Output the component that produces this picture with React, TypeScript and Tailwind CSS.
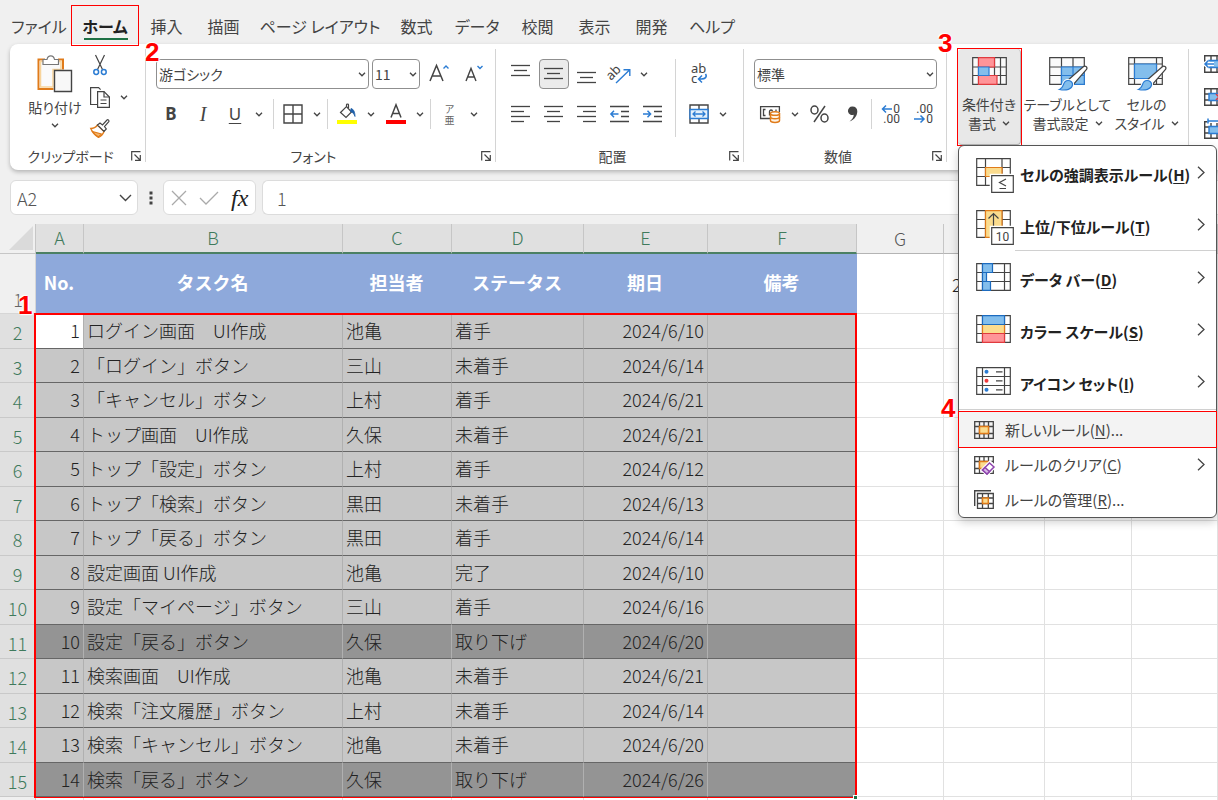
import type { ReactNode } from "react";

const INK = "#444444";
const BLUE = "#2b7cd3";
const ORANGE = "#e07b1a";

const tabs = [
  { label: "ファイル", width: "w-[66px]" },
  { label: "ホーム", width: "w-[66px]", active: true },
  { label: "挿入", width: "w-[57px]" },
  { label: "描画", width: "w-[57px]" },
  { label: "ページ レイアウト", width: "w-[136px]" },
  { label: "数式", width: "w-[57px]" },
  { label: "データ", width: "w-[64px]" },
  { label: "校閲", width: "w-[57px]" },
  { label: "表示", width: "w-[57px]" },
  { label: "開発", width: "w-[57px]" },
  { label: "ヘルプ", width: "w-[64px]" },
];

const columns = ["A", "B", "C", "D", "E", "F", "G", "", "", ""];
const headings = ["No.", "タスク名", "担当者", "ステータス", "期日", "備考"];

const tasks = [
  { no: 1, name: "ログイン画面　UI作成", owner: "池亀", status: "着手", due: "2024/6/10" },
  { no: 2, name: "「ログイン」ボタン", owner: "三山", status: "未着手", due: "2024/6/14" },
  { no: 3, name: "「キャンセル」ボタン", owner: "上村", status: "着手", due: "2024/6/21" },
  { no: 4, name: "トップ画面　UI作成", owner: "久保", status: "未着手", due: "2024/6/21" },
  { no: 5, name: "トップ「設定」ボタン", owner: "上村", status: "着手", due: "2024/6/12" },
  { no: 6, name: "トップ「検索」ボタン", owner: "黒田", status: "未着手", due: "2024/6/13" },
  { no: 7, name: "トップ「戻る」ボタン", owner: "黒田", status: "着手", due: "2024/6/14" },
  { no: 8, name: "設定画面 UI作成", owner: "池亀", status: "完了", due: "2024/6/10" },
  { no: 9, name: "設定「マイページ」ボタン", owner: "三山", status: "着手", due: "2024/6/16" },
  { no: 10, name: "設定「戻る」ボタン", owner: "久保", status: "取り下げ", due: "2024/6/20" },
  { no: 11, name: "検索画面　UI作成", owner: "池亀", status: "未着手", due: "2024/6/21" },
  { no: 12, name: "検索「注文履歴」ボタン", owner: "上村", status: "未着手", due: "2024/6/14" },
  { no: 13, name: "検索「キャンセル」ボタン", owner: "池亀", status: "未着手", due: "2024/6/20" },
  { no: 14, name: "検索「戻る」ボタン", owner: "久保", status: "取り下げ", due: "2024/6/26" },
];

function Svg({ w, h, children }: { w: number; h: number; children: ReactNode }) {
  return (
    <svg width={w} height={h} viewBox={`0 0 ${w} ${h}`} fill="none" stroke={INK} strokeWidth="1.2" className="shrink-0 overflow-visible" aria-hidden="true">
      {children}
    </svg>
  );
}

function Chevron() {
  return (
    <Svg w={8} h={5}>
      <path d="M1 .8 4 3.8 7 .8" strokeWidth="1.3" />
    </Svg>
  );
}

function Callout({ n, className }: { n: number; className: string }) {
  return (
    <span className={`absolute z-30 font-['Liberation_Sans',sans-serif] text-[26px] leading-6 font-bold text-[#ff0000] [text-shadow:0_0_2px_#fff,0_0_2px_#fff,1px_1px_1px_#fff,-1px_-1px_1px_#fff] ${className}`}>
      {n}
    </span>
  );
}

function Divider({ className = "h-[30px]" }: { className?: string }) {
  return <span className={`mx-0.5 w-px shrink-0 bg-[#d4d4d4] ${className}`} />;
}

function Tool({ label, children, active = false }: { label: string; children: ReactNode; active?: boolean }) {
  return (
    <button aria-label={label} className="flex h-[30px] w-[33px] shrink-0 items-center justify-center">
      {active ? (
        <span className="flex h-[30px] w-[30px] items-center justify-center rounded border border-[#8f8f8f] bg-[#ebebeb]">{children}</span>
      ) : (
        children
      )}
    </button>
  );
}

function Drop({ label }: { label: string }) {
  return (
    <button aria-label={label} className="flex h-[30px] w-4 shrink-0 items-center justify-center">
      <Chevron />
    </button>
  );
}

function Group({ title, width, children }: { title: string; width: string; children: ReactNode }) {
  return (
    <section aria-label={title} className={`relative flex shrink-0 flex-col pt-[15px] ${width}`}>
      <div className="h-[86px]">{children}</div>
      <div className="flex h-[22px] items-center pr-[5px]">
        <span className="flex-1 text-center text-sm leading-5 text-[#444]">{title}</span>
        <button aria-label={`${title}の設定`}>
          <Svg w={10} h={10}>
            <path d="M.7 9.500V.7h8.800M3.500 3.500l5 5M9.300 4v5.300H4" />
          </Svg>
        </button>
      </div>
      <span className="absolute top-[5px] right-0 h-[113px] w-px bg-[#d4d4d4]" />
    </section>
  );
}

function Picker({ label, value, width }: { label: string; value: string; width: string }) {
  return (
    <span className={`relative flex h-[30px] items-center rounded border border-[#8f8f8f] bg-white ${width}`}>
      <select aria-label={label} className="h-full w-full appearance-none bg-transparent pl-0.5 text-sm text-[#444] outline-none">
        <option>{value}</option>
      </select>
      <span className="pointer-events-none absolute right-0.5 flex h-full items-center">
        <Chevron />
      </span>
    </span>
  );
}

function PasteIcon() {
  return (
    <Svg w={36} h={38}>
      <path d="M8 4.500H1.500v29.500h15M21 4.500h5v10" stroke={ORANGE} strokeWidth="2" />
      <path d="M3.500 6.500h20.500v8h-8V32H3.500z" fill="#fafafa" stroke="#f8d49b" strokeWidth="1.500" />
      <path d="M6 9.500v-5h4C10.500 2 12 .8 13.800.8S17 2 17.500 4.500h4v5z" fill="#fff" stroke="#777" />
      <path d="M17.500 15.500h17v21h-17z" fill="#f8f8f8" stroke={INK} strokeWidth="1.400" />
    </Svg>
  );
}

function CutIcon() {
  return (
    <Svg w={14} h={21}>
      <path d="M2.500 0 9.500 14.500M11.500 0 4.500 14.500" />
      <circle cx="3.200" cy="17" r="2.400" stroke={BLUE} strokeWidth="1.500" />
      <circle cx="10.800" cy="17" r="2.400" stroke={BLUE} strokeWidth="1.500" />
    </Svg>
  );
}

function CopyIcon() {
  return (
    <Svg w={20} h={21}>
      <path d="M7.500 17.500H.6V.6h8l2 2" />
      <path d="M7.600 4.600h6.400l5.400 5.400v10.400H7.600z" fill="#fff" />
      <path d="M14 4.600V10h5.400M10.500 13h6M10.500 16.500h6" />
    </Svg>
  );
}

function PainterIcon() {
  return (
    <Svg w={20} h={19}>
      <path d="M.8 9.500C4 9.500 6 8 7.500 6l6.500 6.500C13 15 11 17.500 8.500 18.300 5 16.500 2.500 13.500.8 9.500Z" fill="#fff" stroke={ORANGE} strokeWidth="1.400" />
      <path d="M2.500 12.500 11.500 15 8.500 18C6 16.500 4 14.800 2.500 12.500Z" fill="#f5b56a" stroke={ORANGE} />
      <path d="m7.500 6 2.500-2 2.500 2L17 1c1-.8 2.600.6 1.800 1.700L14.500 7.500l1.800 2.500-2.300 2.500z" fill="#fff" />
    </Svg>
  );
}

// Stacked text lines, each as [x, y, length].
function Lines({ rows, h = 20 }: { rows: number[][]; h?: number }) {
  return (
    <Svg w={19} h={h}>
      {rows.map(([x, y, len]) => (
        <path key={y} d={`M${x} ${y}.5h${len}`} strokeWidth="1.300" />
      ))}
    </Svg>
  );
}

function IndentIcon({ out = false }: { out?: boolean }) {
  return (
    <Svg w={19} h={18}>
      <path d="M0 1.500h19M11 6.500h8M11 11.500h8M0 16.500h19" strokeWidth="1.300" />
      {out ? <path d="M8.500 9H1M4 5.800.9 9 4 12.200" stroke={BLUE} strokeWidth="1.500" /> : <path d="M0 9h7.500M4.500 5.800 7.600 9l-3.100 3.200" stroke={BLUE} strokeWidth="1.500" />}
    </Svg>
  );
}

function OrientationIcon() {
  return (
    <Svg w={22} h={20}>
      <text x="-1" y="14" transform="rotate(-45 4 12)" stroke="none" fill={INK} fontSize="13" fontFamily="Noto Sans, sans-serif">ab</text>
      <path d="M7 19 20.500 6M14.500 5.700h6.300v6.300" stroke={BLUE} strokeWidth="1.400" />
    </Svg>
  );
}

function WrapIcon() {
  return (
    <Svg w={18} h={20}>
      <text x="1" y="9" stroke="none" fill={INK} fontSize="13" fontFamily="Noto Sans, sans-serif">ab</text>
      <text x="1" y="19" stroke="none" fill={INK} fontSize="13" fontFamily="Noto Sans, sans-serif">c</text>
      <path d="M15.500 10c2 3-.5 5-4 5H9M12 11.500 8.500 15l3.500 3.500" stroke={BLUE} strokeWidth="1.500" />
    </Svg>
  );
}

function MergeIcon() {
  return (
    <Svg w={20} h={20}>
      <path d="M1 1h18v18H1zM10 1v4M10 15v4" strokeWidth="1.400" />
      <path d="M1 5.500h18v9H1z" fill="#e3f0fb" stroke={BLUE} strokeWidth="1.400" />
      <path d="M4 10h12M6.500 7.500 4 10l2.500 2.500M13.500 7.500 16 10l-2.500 2.500" stroke={BLUE} strokeWidth="1.300" />
    </Svg>
  );
}

function FillIcon() {
  return (
    <Svg w={20} h={20}>
      <path d="M0 16h20v4H0z" fill="#ffff00" stroke="none" />
      <path d="m3.500 8.500 6-6 5 5.500-5.500 5.500zM9.500 2.500V.8c0-1 2-1 2 0V4" fill="#fff" />
      <path d="M14 4.500c2.500.5 4 3.500 4 8-1.500-3.500-2.500-4.500-4.500-4.800z" fill="#1f5fa8" stroke="#1f5fa8" strokeWidth=".8" />
    </Svg>
  );
}

function CurrencyIcon() {
  return (
    <Svg w={21} h={17}>
      <path d="M10 12.500H.6V.6h18.800V6M5.500 3.500h-2v6h2M9.500 9.500v-4c0-2 3-2 3 0M16 3.500v2" strokeWidth="1.300" />
      <path d="M10.500 7.500v7c0 2.500 9 2.500 9 0v-7" fill="#fff3e3" stroke={ORANGE} strokeWidth="1.500" />
      <ellipse cx="15" cy="7.500" rx="4.500" ry="1.800" fill="#fff" stroke={ORANGE} strokeWidth="1.500" />
      <path d="M10.500 11c0 2.300 9 2.300 9 0" stroke={ORANGE} strokeWidth="1.500" />
    </Svg>
  );
}

function DecimalIcon({ more = false }: { more?: boolean }) {
  return (
    <Svg w={20} h={20}>
      <text x="19" y="9" textAnchor="end" stroke="none" fill={INK} fontSize="12" fontFamily="Roboto, sans-serif">{more ? "0" : ".00"}</text>
      <text x="19" y="19" textAnchor="end" stroke="none" fill={INK} fontSize="12" fontFamily="Roboto, sans-serif">{more ? ".00" : "0"}</text>
      {more ? <path d="M11 5H1.500M5 1.500 1.500 5 5 8.500" stroke={BLUE} strokeWidth="1.500" /> : <path d="M0 15h10M6.500 11.500 10 15l-3.500 3.500" stroke={BLUE} strokeWidth="1.500" />}
    </Svg>
  );
}

function ConditionalIcon() {
  return (
    <Svg w={35} h={28}>
      <path d="M.7.7h33.600v26.600H.7zM.7 10h33.600M.7 18.500h33.600M6.500.7v26.600M22.500.7v26.600M28.500.7v26.600" fill="#fafafa" />
      <path d="M6.500.7h16V10h-16zM6.500 18.500h18.500v8.800H6.500z" fill="#ff9498" stroke="#e03a3e" />
      <path d="M6.500 10h10.500v8.500H6.500z" fill="#83beec" stroke={BLUE} />
    </Svg>
  );
}

function Brush() {
  return (
    <>
      <path d="M18 24 34 10c2-2 5 0 3.500 2.500L24 28z" fill="#fff" />
      <path d="M19 23.500c2.500 0 5 2 4.500 4.500-.5 4-6 6-13 4.500 3-1.200 3.200-2.500 4-5 .8-2.500 2-4 4.500-4Z" fill="#6fb1e8" stroke="#fff" strokeWidth="3" />
      <path d="M19 23.500c2.500 0 5 2 4.500 4.500-.5 4-6 6-13 4.500 3-1.200 3.200-2.500 4-5 .8-2.500 2-4 4.500-4Z" fill="#83beec" stroke={BLUE} />
    </>
  );
}

function TableFormatIcon() {
  return (
    <Svg w={38} h={34}>
      <path d="M.7.7h34.600v26.600H.7zM.7 10h34.600M.7 18.500h34.600M12.500.7v26.600M24 .7v26.600" fill="#fafafa" />
      <path d="M12.500 10h22.800v17.300H12.500z" fill="#83beec" stroke={BLUE} />
      <path d="M12.500 18.500h22.800M24 10v17.300" stroke={BLUE} />
      <Brush />
    </Svg>
  );
}

function CellStyleIcon() {
  return (
    <Svg w={38} h={34}>
      <path d="M.7.7h33.600v26.600H.7zM.7 7h33.600M.7 21.500h33.600M6.500.7v26.600M28.500.7v26.600" fill="#fafafa" />
      <path d="M6.500 7h22v14.500h-22z" fill="#83beec" stroke={BLUE} />
      <Brush />
    </Svg>
  );
}

function CellsIcon({ kind }: { kind: "insert" | "delete" | "format" }) {
  return (
    <Svg w={20} h={18}>
      <path d="M.7.7h18.600v16.600H.7zM.7 6h18.600M.7 12h18.600M7 .7V6M7 12v5.300M13 .7V6M13 12v5.300" fill="#fff" strokeWidth="1.400" />
      <path d="M5 5.500h15v7H5z" fill="#83beec" stroke={BLUE} strokeWidth="1.400" />
      {kind === "insert" && <path d="M10 9H1M4.500 5.500 1 9l3.500 3.500" stroke="#fff" strokeWidth="4" />}
      {kind === "insert" && <path d="M10 9H1M4.500 5.500 1 9l3.500 3.500" stroke={BLUE} strokeWidth="1.500" />}
      {kind === "delete" && <path d="m12 6 6 6M18 6l-6 6" stroke="#e03a3e" strokeWidth="1.500" />}
      {kind === "format" && <path d="M3.500-2H20v4H3.500z" fill="#fff" stroke="none" />}
      {kind === "format" && <path d="M4 0h16M4-2.500v5" stroke={BLUE} strokeWidth="1.500" />}
    </Svg>
  );
}

function MenuGrid({ children }: { children: ReactNode }) {
  return (
    <Svg w={38} h={35}>
      {children}
    </Svg>
  );
}

const wideGrid = "M.7.7h33.600v26.600H.7zM.7 9.500h33.600M.7 18.500h33.600M6.500.7v26.600M28.500.7v26.600";
const ruleGrid = "M.7.7h33.600v26.600H.7zM.7 9.500h33.600M.7 18.500h33.600M9.500.7v26.600M26 .7v26.600";

function SmallGrid() {
  return <path d="M.7.7h18.600v16.600H.7zM.7 5.500h18.600M.7 12.500h18.600M5.500.7v16.600M14.500.7v16.600M10 .7v16.600" strokeWidth="1.300" />;
}

const bigItems = [
  {
    label: "セルの強調表示ルール",
    accel: "H",
    icon: (
      <MenuGrid>
        <path d={ruleGrid} />
        <path d="M9.500 9.500H26v9H9.500z" fill="#fbdc8e" stroke={ORANGE} />
        <path d="M15.700 17.700h21.600v16.600H15.700z" fill="#fff" stroke="#fff" strokeWidth="4" />
        <path d="M15.700 17.700h21.600v16.600H15.700z" fill="#fff" />
        <path d="m30 21-6.500 3.500L30 28M23.500 30.500H30" />
      </MenuGrid>
    ),
  },
  {
    label: "上位/下位ルール",
    accel: "T",
    icon: (
      <MenuGrid>
        <path d={ruleGrid} />
        <path d="M9.500.7H26v26.600H9.500z" fill="#fbdc8e" stroke={ORANGE} />
        <path d="M17.500 16V3.500M12.500 8.500l5-5 5 5" />
        <path d="M15.700 17.700h21.600v16.600H15.700z" fill="#fff" stroke="#fff" strokeWidth="4" />
        <path d="M15.700 17.700h21.600v16.600H15.700z" fill="#fff" />
        <text x="26.500" y="30.500" textAnchor="middle" fontSize="12" stroke="none" fill={INK} fontFamily="Roboto, sans-serif">10</text>
      </MenuGrid>
    ),
  },
  {
    label: "データ バー",
    accel: "D",
    icon: (
      <MenuGrid>
        <path d={wideGrid} />
        <path d="M6.500.7h10v8.800h-10zM6.500 9.500h4v9h-4zM6.500 18.500h8v8.800h-8z" fill="#83beec" stroke="#1c6bbf" />
      </MenuGrid>
    ),
  },
  {
    label: "カラー スケール",
    accel: "S",
    icon: (
      <MenuGrid>
        <path d={wideGrid} />
        <path d="M6.500 9.500h22v9h-22z" fill="#fbdc8e" stroke={ORANGE} />
        <path d="M6.500.7h22v8.800h-22z" fill="#83beec" stroke="#1c6bbf" />
        <path d="M6.500 18.500h22v8.800h-22z" fill="#ff9498" stroke="#e03a3e" />
      </MenuGrid>
    ),
  },
  {
    label: "アイコン セット",
    accel: "I",
    icon: (
      <MenuGrid>
        <path d={wideGrid} />
        <path d="M20 4.800h6.500M20 13.800h6.500M20 22.800h6.500" />
        <g stroke="none">
          <circle cx="10.500" cy="4.800" r="2" fill={BLUE} />
          <circle cx="10.500" cy="13.800" r="2" fill="#f03a3e" />
          <circle cx="10.500" cy="22.800" r="2" fill={BLUE} />
        </g>
      </MenuGrid>
    ),
  },
];

const smallItems = [
  {
    label: "新しいルール",
    accel: "N",
    tail: "...",
    active: true,
    icon: (
      <Svg w={20} h={18}>
        <SmallGrid />
        <path d="M5.500 5.500h9v7h-9z" fill="#fbdc8e" stroke={ORANGE} strokeWidth="1.500" />
      </Svg>
    ),
  },
  {
    label: "ルールのクリア",
    accel: "C",
    tail: "",
    sub: true,
    icon: (
      <Svg w={20} h={18}>
        <SmallGrid />
        <path d="M5.500 5.500h9v7h-9z" fill="#fbdc8e" stroke={ORANGE} strokeWidth="1.500" />
        <path d="m8 14 8-8 5 4.500-8 8z" fill="#fff" stroke="#fff" strokeWidth="3" />
        <path d="m8.500 14 7-7 4.500 4-7 7z" fill="#fff" stroke="#8e44ad" strokeWidth="1.500" />
        <path d="m8.500 14 2.500-2.500 4.500 4L13 18z" fill="#d9b8e8" stroke="#8e44ad" strokeWidth="1.500" />
      </Svg>
    ),
  },
  {
    label: "ルールの管理",
    accel: "R",
    tail: "...",
    icon: (
      <Svg w={20} h={19}>
        <path d="M.7 16V.7H17" strokeWidth="1.400" />
        <path d="M3.500 3.500h15.800v14.800H3.500zM3.500 8h15.800M3.500 13.500h15.800M8.500 3.500v14.800M14.300 3.500v14.800" strokeWidth="1.300" />
        <path d="M8.500 8h5.800v5.500H8.500z" fill="#fbdc8e" stroke={ORANGE} strokeWidth="1.500" />
      </Svg>
    ),
  },
];

function SubArrow() {
  return (
    <Svg w={8} h={13}>
      <path d="m1 .8 6 5.700-6 5.700" strokeWidth="1.300" />
    </Svg>
  );
}

function RuleMenu() {
  return (
    <div role="menu" className="absolute top-24 left-0 z-20 w-[259px] rounded-md border border-[#555] bg-white text-[15px] leading-6 text-[#222] shadow-[0_4px_10px_rgba(0,0,0,0.2)]">
      {bigItems.map((item, i) => (
        <div key={item.accel}>
          {i === 2 && <hr className="ml-14 border-[#d0d0d0]" />}
          <button role="menuitem" className="flex h-[52px] w-full items-center pr-[11px] pl-[17px]">
            <span className="flex h-[29px] w-11 shrink-0 items-start">{item.icon}</span>
            <span className="flex-1 pt-1.5 text-left font-bold whitespace-nowrap">
              {item.label}(<u className="underline-offset-2">{item.accel}</u>)
            </span>
            <SubArrow />
          </button>
        </div>
      ))}
      <hr className="my-0.5 border-[#d0d0d0]" />
      {smallItems.map((item) => (
        <div key={item.accel} className="relative">
          <button role="menuitem" className={`flex h-[35px] w-full items-center pr-[11px] pl-[15px] ${item.active ? "bg-[#f3f3f3] outline-1 outline-[#f00]" : ""}`}>
            <span className="flex w-[31px] shrink-0">{item.icon}</span>
            <span className="flex-1 text-left whitespace-nowrap text-[#444]">
              {item.label}(<u className="underline-offset-2">{item.accel}</u>){item.tail}
            </span>
            {item.sub && <SubArrow />}
          </button>
          {item.active && <Callout n={4} className="-top-4 -left-[18px]" />}
        </div>
      ))}
    </div>
  );
}

function BigTool({ lines, width, children, pressed = false }: { lines: string[]; width: string; children: ReactNode; pressed?: boolean }) {
  return (
    <button className={`flex h-24 shrink-0 flex-col items-center pt-2 text-sm leading-[19px] whitespace-nowrap text-[#444] ${width} ${pressed ? "rounded border-r border-b border-[#b5b5b5] bg-[#e8e8e8]" : ""}`}>
      <span className="flex h-[38px] items-start">{children}</span>
      <span>{lines[0]}</span>
      <span className="flex items-center gap-1.5">
        {lines[1]}
        <Chevron />
      </span>
    </button>
  );
}

function Ribbon() {
  return (
    <div className="ml-2.5 flex h-[126px] rounded-l-lg bg-white shadow-[0_2px_4px_rgba(0,0,0,0.25)]">
      <Group title="クリップボード" width="w-[136px]">
        <div className="-mt-1 flex pl-2.5">
          <button className="flex w-[70px] flex-col items-center text-sm leading-5 text-[#444]">
            <PasteIcon />
            <span className="mt-1">貼り付け</span>
            <span className="mt-1.5">
              <Chevron />
            </span>
          </button>
          <div className="flex flex-col gap-[11px]">
            <button aria-label="切り取り" className="flex w-5 justify-center"><CutIcon /></button>
            <span className="flex items-center gap-2.5">
              <button aria-label="コピー"><CopyIcon /></button>
              <button aria-label="コピーのオプション"><Chevron /></button>
            </span>
            <button aria-label="書式のコピー/貼り付け"><PainterIcon /></button>
          </div>
        </div>
      </Group>

      <Group title="フォント" width="w-[350px]">
        <div className="flex gap-[3px] pl-2.5">
          <Picker label="フォント名" value="游ゴシック" width="w-[213px]" />
          <Picker label="フォント サイズ" value="11" width="w-12" />
          <Tool label="フォント サイズの拡大">
            <Svg w={20} h={20}>
              <path d="M0 17 6.500 1.500 13 17M2 12h9" strokeWidth="1.500" />
              <path d="m13.500 4.500 2.500-2.500L18.500 4.500" stroke={BLUE} strokeWidth="1.400" />
            </Svg>
          </Tool>
          <Tool label="フォント サイズの縮小">
            <Svg w={20} h={20}>
              <path d="m0 17 5-12.500L10 17M1.800 13h6.400" strokeWidth="1.400" />
              <path d="m11.500 2 2.500 2.500L16.500 2" stroke={BLUE} strokeWidth="1.400" />
            </Svg>
          </Tool>
        </div>
        <div className="mt-2.5 flex items-center pl-[9px] font-['Noto_Sans',sans-serif] text-[17px] text-[#444]">
          <button aria-label="太字" className="w-8 font-bold">B</button>
          <button aria-label="斜体" className="w-8 font-['Liberation_Serif',serif] text-xl italic">I</button>
          <button aria-label="下線" className="w-8 underline underline-offset-3">U</button>
          <Drop label="下線の種類" />
          <span className="w-1" />
          <Divider />
          <Tool label="罫線">
            <Svg w={20} h={20}>
              <path d="M1 1h18v18H1zM10 1v18M1 10h18" strokeWidth="1.400" />
            </Svg>
          </Tool>
          <Drop label="罫線の種類" />
          <Divider />
          <Tool label="塗りつぶしの色"><FillIcon /></Tool>
          <Drop label="塗りつぶしの色の一覧" />
          <Tool label="フォントの色">
            <Svg w={20} h={20}>
              <path d="M0 16h20v4H0z" fill="#ff0000" stroke="none" />
              <path d="M5 13.500 10 .8l5 12.700M6.500 9.500h7" strokeWidth="1.500" />
            </Svg>
          </Tool>
          <Drop label="フォントの色の一覧" />
          <Divider />
          <Tool label="ふりがな">
            <span className="flex flex-col items-center font-['Noto_Sans_CJK_JP',sans-serif] text-[10px] leading-[11px] text-[#666]">
              <span>ア</span>
              <span>亜</span>
            </span>
          </Tool>
          <Drop label="ふりがなの設定" />
        </div>
      </Group>

      <Group title="配置" width="w-[248px]">
        <div className="flex pl-2">
          <div className="flex w-[169px] flex-col gap-2.5">
            <div className="flex">
              <Tool label="上揃え"><Lines rows={[[0, 2, 19], [3, 7, 13], [0, 12, 19]]} h={22} /></Tool>
              <Tool label="上下中央揃え" active><Lines rows={[[0, 4, 19], [3, 9, 13], [0, 14, 19]]} /></Tool>
              <Tool label="下揃え"><Lines rows={[[0, 9, 19], [3, 14, 13], [0, 19, 19]]} h={22} /></Tool>
              <Tool label="方向"><OrientationIcon /></Tool>
              <Drop label="方向の一覧" />
            </div>
            <div className="flex">
              <Tool label="左揃え"><Lines rows={[[0, 2, 19], [0, 7, 13], [0, 12, 19], [0, 17, 13]]} /></Tool>
              <Tool label="中央揃え"><Lines rows={[[0, 2, 19], [3, 7, 13], [0, 12, 19], [3, 17, 13]]} /></Tool>
              <Tool label="右揃え"><Lines rows={[[0, 2, 19], [6, 7, 13], [0, 12, 19], [6, 17, 13]]} /></Tool>
              <Tool label="インデントを減らす"><IndentIcon out /></Tool>
              <Tool label="インデントを増やす"><IndentIcon /></Tool>
            </div>
          </div>
          <Divider className="h-[78px]" />
          <div className="flex flex-col gap-2.5 pl-1">
            <Tool label="折り返して全体を表示する"><WrapIcon /></Tool>
            <span className="flex">
              <Tool label="セルを結合して中央揃え"><MergeIcon /></Tool>
              <Drop label="結合の種類" />
            </span>
          </div>
        </div>
      </Group>

      <Group title="数値" width="w-[203px]">
        <div className="flex flex-col gap-2.5 pl-2.5">
          <Picker label="表示形式" value="標準" width="w-[183px]" />
          <div className="flex items-center">
            <Tool label="通貨表示形式"><CurrencyIcon /></Tool>
            <Drop label="通貨の一覧" />
            <Tool label="パーセント スタイル">
              <Svg w={19} h={18}>
                <path d="M15 1 4 17" strokeWidth="1.500" />
                <ellipse cx="4.500" cy="5" rx="3.500" ry="4" strokeWidth="1.500" />
                <ellipse cx="14.500" cy="13" rx="3.500" ry="4" strokeWidth="1.500" />
              </Svg>
            </Tool>
            <Tool label="桁区切りスタイル">
              <Svg w={12} h={16}>
                <path d="M5.500.5A4.300 4.300 0 1 0 6.800 8.800C6.500 11.500 5 13.800 2.500 15.500c5-1.800 7.800-6 7.800-10.300C10.300 2.300 8.300.5 5.500.5Z" fill={INK} stroke="none" />
              </Svg>
            </Tool>
            <Divider />
            <Tool label="小数点以下の表示桁数を増やす"><DecimalIcon more /></Tool>
            <Tool label="小数点以下の表示桁数を減らす"><DecimalIcon /></Tool>
          </div>
        </div>
      </Group>

      <div className="relative flex w-[242px] shrink-0 pt-[5px] pl-[11px]">
        <div className="relative h-24 outline-1 outline-[#f00]">
          <BigTool lines={["条件付き", "書式"]} width="w-[63px]" pressed><ConditionalIcon /></BigTool>
          <Callout n={3} className="-top-[18px] -left-5" />
          <RuleMenu />
        </div>
        <BigTool lines={["テーブルとして", "書式設定"]} width="w-[93px]"><TableFormatIcon /></BigTool>
        <BigTool lines={["セルの", "スタイル"]} width="w-[65px]"><CellStyleIcon /></BigTool>
        <span className="absolute top-[5px] right-0 h-[113px] w-px bg-[#d4d4d4]" />
      </div>

      <div className="flex min-w-0 flex-1 flex-col gap-[15px] overflow-hidden pt-[11px] pl-[15px]">
        <button aria-label="挿入"><CellsIcon kind="insert" /></button>
        <button aria-label="削除"><CellsIcon kind="delete" /></button>
        <button aria-label="書式"><CellsIcon kind="format" /></button>
      </div>
    </div>
  );
}

function FormulaBar() {
  return (
    <div className="mt-2.5 flex h-[35px] items-center pl-2.5 text-lg text-[#555]">
      <div className="flex h-full w-32 items-center rounded-md border border-[#dcdcdc] bg-white pr-[5px] pl-1.5">
        <input aria-label="名前ボックス" defaultValue="A2" className="w-full min-w-0 font-light outline-none" />
        <button aria-label="名前の一覧">
          <Svg w={13} h={8}>
            <path d="m1 1 5.500 5.500L12 1" strokeWidth="1.400" />
          </Svg>
        </button>
      </div>
      <span className="flex w-[25px] justify-center">
        <Svg w={4} h={14}>
          <path d="M.5.5h3v3h-3zM.5 5.500h3v3h-3zM.5 10.500h3v3h-3z" fill={INK} stroke="none" />
        </Svg>
      </span>
      <div className="flex h-full w-[93px] items-center gap-3 rounded-md border border-[#dcdcdc] bg-white pl-[7px]">
        <button aria-label="キャンセル">
          <Svg w={16} h={16}>
            <path d="m1 1 14 14M15 1 1 15" stroke="#aaa" strokeWidth="1.300" />
          </Svg>
        </button>
        <button aria-label="入力">
          <Svg w={20} h={14}>
            <path d="m1 7 6 6L19 1" stroke="#aaa" strokeWidth="1.300" />
          </Svg>
        </button>
        <button aria-label="関数の挿入" className="font-['Liberation_Serif',serif] text-2xl leading-7 text-[#222] italic">fx</button>
      </div>
      <input aria-label="数式バー" defaultValue="1" className="ml-1.5 h-full min-w-0 flex-1 rounded-l-md border border-r-0 border-[#dcdcdc] bg-white pl-3.5 font-light outline-none" />
    </div>
  );
}

function Sheet() {
  const cell = "border-r border-b border-r-[#b0b0b0] border-b-[#666] px-[3px] pb-0.5";
  const blank = "border-r border-b border-[#e1e1e1] bg-white";

  return (
    <div className="relative mt-[9px] flex-1 overflow-hidden">
      <table className="w-full table-fixed border-separate border-spacing-0 text-lg leading-6 font-light text-[#222]">
        <colgroup>
          <col className="w-9" />
          <col className="w-12" />
          <col className="w-[259px]" />
          <col className="w-[109px]" />
          <col className="w-[132px]" />
          <col className="w-[124px]" />
          <col className="w-[149px]" />
          <col className="w-[87px]" />
          <col className="w-[101px]" />
          <col className="w-[87px]" />
          <col />
        </colgroup>
        <thead>
          <tr className="h-[30px]">
            <th className="border-r border-b border-[#c6c6c6] pr-0.5 pb-0.5">
              <span className="flex justify-end">
                <Svg w={24} h={24}>
                  <path d="M24 0v24H0z" fill="#dadada" stroke="none" />
                </Svg>
              </span>
            </th>
            {columns.map((name, i) => (
              <th key={i} className={`border-r border-r-[#c6c6c6] pb-0.5 font-light ${i < 6 ? "border-b-2 border-b-[#4b8063] bg-[#e0e0e0] text-[#3f7a5c]" : "border-b border-b-[#b4b4b4] text-[#555]"}`}>
                {name}
              </th>
            ))}
          </tr>
        </thead>
        <tbody>
          <tr className="h-[60px]">
            <th className="relative border-r border-b border-[#d6d6d6] pr-3 pb-0.5 text-right align-bottom font-light text-[#666]">
              1
              <Callout n={1} className="-bottom-1 left-[18px]" />
            </th>
            {headings.map((text) => (
              <th key={text} className="bg-[#8ea9db] pr-0.5 pb-1 font-bold text-white">{text}</th>
            ))}
            <td className={blank} />
            <td className={`${blank} pl-2`}>2</td>
            <td className={blank} />
            <td className={blank} />
          </tr>
          {tasks.map((task, i) => {
            const dropped = task.status === "取り下げ";
            const shade = dropped ? "bg-[#949494] border-r-[#949494]" : "bg-[#c7c7c7]";
            return (
              <tr key={task.no} className="even:h-[35px] odd:h-[34px]">
                <th className="border-r border-b border-[#c9c9c9] bg-[#e0e0e0] pt-0.5 font-light text-[#3f7a5c]">{task.no + 1}</th>
                <td className={`${cell} text-right ${i === 0 ? "bg-white" : shade}`}>{task.no}</td>
                <td className={`${cell} whitespace-nowrap ${shade}`}>{task.name}</td>
                <td className={`${cell} ${shade}`}>{task.owner}</td>
                <td className={`${cell} ${shade}`}>{task.status}</td>
                <td className={`${cell} text-right ${shade}`}>{task.due}</td>
                <td className={`${cell} ${shade}`} />
                <td className={blank} />
                <td className={blank} />
                <td className={blank} />
                <td className={blank} />
              </tr>
            );
          })}
          <tr className="h-[35px]">
            <th className="border-r border-[#c9c9c9]" />
            {columns.map((_, i) => (
              <td key={i} className={blank} />
            ))}
          </tr>
        </tbody>
      </table>
      {/* Selected range A2:F15 */}
      <div className="pointer-events-none absolute top-[89px] left-[34px] h-[485px] w-[823px] border-2 border-b border-[#f00]">
        <span className="absolute -right-[3px] -bottom-[3px] h-[5px] w-[5px] border border-white bg-[#1e7145]" />
      </div>
    </div>
  );
}

export default function App() {
  return (
    <main className="flex h-screen flex-col overflow-hidden bg-[#f0f0f0] font-['Noto_Sans_CJK_JP','Noto_Sans',sans-serif]">
      <nav className="flex h-[44px] shrink-0 pt-1.5 pl-1.5 text-base text-[#444] [font-feature-settings:'palt']">
        {tabs.map((tab) => (
          <button key={tab.label} className={`relative h-[39px] shrink-0 whitespace-nowrap ${tab.width} ${tab.active ? "z-10 font-bold text-[#222] outline-1 outline-[#f00]" : ""}`}>
            {tab.label}
            {tab.active && <span className="absolute bottom-[5px] left-3 h-0.5 w-11 bg-[#1e7145]" />}
            {tab.active && <Callout n={2} className="top-[34px] left-[73px]" />}
          </button>
        ))}
      </nav>
      <div className="shrink-0 [font-feature-settings:'palt']">
        <Ribbon />
      </div>
      <FormulaBar />
      <Sheet />
    </main>
  );
}
